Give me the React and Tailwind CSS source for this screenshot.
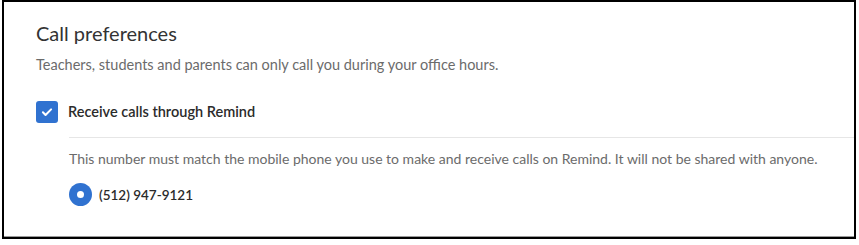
export default function App() {
  return (
    <div className="w-[859px] h-[245px] bg-white" style={{ fontFamily: 'Lato, "Noto Sans", sans-serif' }}>
      <div className="ml-[2px] w-[854px] h-[239px] border-2 border-black border-b-0 flex flex-col">
        <div className="flex-1 flex flex-col pl-8">
          <h2 className="mt-[19px] text-[20px] leading-[24px] text-[#333333]">Call preferences</h2>
          <p className="mt-[11px] text-[14.5px] leading-[18px] text-[#6b6b6b]">
            Teachers, students and parents can only call you during your office hours.
          </p>
          <label className="mt-[27px] flex items-center gap-[10px]">
            <span className="w-[22px] h-[22px] rounded-[3px] bg-[#3072d0] flex items-center justify-center">
              <svg width="14" height="14" viewBox="0 0 24 24" fill="none" stroke="white" strokeWidth="3.5" strokeLinecap="round" strokeLinejoin="round">
                <path d="M5 12.5l4.5 4.5L19 7.5" />
              </svg>
            </span>
            <span className="text-[14.5px] leading-[18px] font-semibold text-[#2b2b2b]">Receive calls through Remind</span>
          </label>
          <div className="ml-[33px] mt-[14px] border-t border-[#e6e6e6]">
            <p className="mt-[12px] text-[14px] leading-[18px] text-[#6b6b6b]">
              This number must match the mobile phone you use to make and receive calls on Remind. It will not be shared with anyone.
            </p>
            <div className="mt-[15px] flex items-center gap-[7px]">
              <span className="w-[23px] h-[23px] rounded-full bg-[#3072d0] flex items-center justify-center">
                <span className="w-[7px] h-[7px] rounded-full bg-white" />
              </span>
              <span className="text-[13.5px] leading-[18px] font-semibold text-[#2b2b2b]">(512) 947-9121</span>
            </div>
          </div>
        </div>
        <div className="h-[1px] bg-[#9a9a9a]" />
        <div className="h-[2px] bg-black" />
      </div>
    </div>
  );
}
